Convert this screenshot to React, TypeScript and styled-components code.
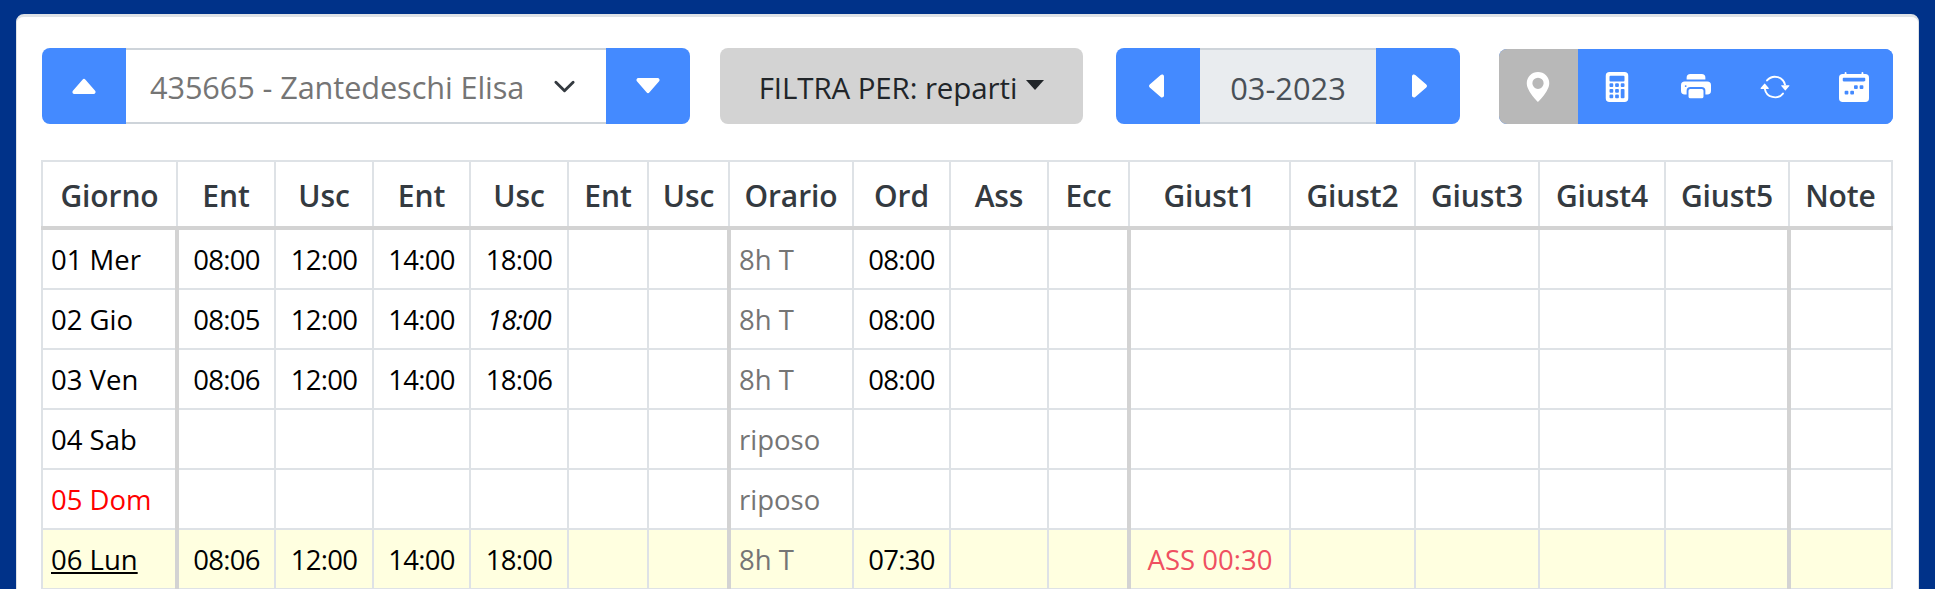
import React from "react";
import styled, { createGlobalStyle } from "styled-components";
import {
  BsCaretUpFill,
  BsCaretDownFill,
  BsCaretLeftFill,
  BsCaretRightFill,
  BsGeoAltFill,
  BsCalculatorFill,
  BsPrinterFill,
  BsArrowRepeat,
  BsCalendar2WeekFill,
} from "react-icons/bs";

const GlobalStyle = createGlobalStyle`
  html, body {
    margin: 0;
    height: 589px;
    overflow: hidden;
    background: #003289;
    font-family: "Open Sans", "Liberation Sans", sans-serif;
  }
`;

const Card = styled.div`
  margin: 14px 16px 0 16px;
  padding: 31px 25px 40px 25px;
  background: #fff;
  border: 1px solid #dee2e6;
  border-top-width: 3px;
  border-radius: 8px;
  box-sizing: content-box;
  width: 1851px;
`;

const Toolbar = styled.div`
  display: flex;
  align-items: stretch;
  height: 76px;
  margin-bottom: 36px;
`;

const Group = styled.div<{ $w: number; $ml: number }>`
  display: flex;
  width: ${(p) => p.$w}px;
  margin-left: ${(p) => p.$ml}px;
  border-radius: 8px;
  overflow: hidden;
`;

const BlueButton = styled.div`
  width: 84px;
  flex: none;
  display: flex;
  align-items: center;
  justify-content: center;
  background: #448aff;
  color: #fff;
  font-size: 32px;
`;

const SelectBox = styled.div`
  flex: 1;
  display: flex;
  align-items: center;
  justify-content: space-between;
  padding: 0 30px 0 24px;
  border-top: 2px solid #ced4da;
  border-bottom: 2px solid #ced4da;
  color: #757575;
  font-size: 30.7px;
  letter-spacing: -0.1px;

  span {
    padding-top: 2px;
  }
`;

const MonthBox = styled.div`
  flex: 1;
  display: flex;
  align-items: center;
  justify-content: center;
  padding-top: 3px;
  background: #e9ecef;
  border-top: 2px solid #ced4da;
  border-bottom: 2px solid #ced4da;
  color: #495057;
  font-size: 30.8px;
`;

const FilterButton = styled.div`
  width: 363px;
  margin-left: 30px;
  display: flex;
  align-items: center;
  justify-content: center;
  gap: 9px;
  padding-top: 2px;
  box-sizing: border-box;
  background: #d3d3d3;
  border-radius: 8px;
  color: #212529;
  font-size: 29.5px;
  letter-spacing: -0.1px;
`;

const Caret = styled.span`
  width: 0;
  height: 0;
  margin-bottom: 5px;
  border-top: 10px solid #212529;
  border-left: 9px solid transparent;
  border-right: 9px solid transparent;
`;

const IconBar = styled.div`
  width: 394px;
  margin: 1px 0 0 39px;
  display: flex;
  border-radius: 8px;
  overflow: hidden;
  background: #448aff;
`;

const IconButton = styled.div<{ $active?: boolean }>`
  flex: 1;
  display: flex;
  align-items: center;
  justify-content: center;
  background: ${(p) => (p.$active ? "#b8b8b8" : "#448aff")};
  color: #fff;
  font-size: 30px;
`;

const Table = styled.table`
  width: 1850px;
  margin-left: -1px;
  table-layout: fixed;
  border-collapse: collapse;
  color: #000;
  font-size: 27.5px;
`;

const HeadCell = styled.th`
  height: 62px;
  padding: 2px 0 0;
  border: 2px solid #dee2e6;
  border-bottom: 4px solid #d3d3d3;
  color: #343a40;
  font-size: 30px;
  font-weight: 600;
  letter-spacing: -0.1px;
  text-align: center;
`;

const Cell = styled.td<{ $thick?: boolean; $left?: boolean; $muted?: boolean; $time?: boolean }>`
  height: 57px;
  padding: 1px 0 0 ${(p) => (p.$left ? "8px" : "0")};
  border: 2px solid #dee2e6;
  border-left: ${(p) => (p.$thick ? "4px solid #d3d3d3" : "2px solid #dee2e6")};
  text-align: ${(p) => (p.$left ? "left" : "center")};
  color: ${(p) => (p.$muted ? "#757575" : "inherit")};
  letter-spacing: ${(p) => (p.$time ? "-0.7px" : "0")};
`;

const Row = styled.tr<{ $today?: boolean }>`
  background: ${(p) => (p.$today ? "#ffffe0" : "#fff")};
`;

const DayLabel = styled.span<{ $holiday?: boolean; $today?: boolean }>`
  color: ${(p) => (p.$holiday ? "#ff0000" : "#000")};
  text-decoration: ${(p) => (p.$today ? "underline" : "none")};
`;

const Estimated = styled.em`
  font-style: italic;
`;

const Absence = styled.span`
  color: #ef5061;
`;

const widths = [135, 98, 98, 97, 98, 80, 81, 124, 97, 98, 81, 161, 125, 124, 126, 124, 103];

const headers = [
  "Giorno", "Ent", "Usc", "Ent", "Usc", "Ent", "Usc", "Orario", "Ord",
  "Ass", "Ecc", "Giust1", "Giust2", "Giust3", "Giust4", "Giust5", "Note",
];

const days = [
  { day: "01 Mer", times: ["08:00", "12:00", "14:00", "18:00"], shift: "8h T", ord: "08:00" },
  { day: "02 Gio", times: ["08:05", "12:00", "14:00", "18:00"], shift: "8h T", ord: "08:00", italicLast: true },
  { day: "03 Ven", times: ["08:06", "12:00", "14:00", "18:06"], shift: "8h T", ord: "08:00" },
  { day: "04 Sab", times: ["", "", "", ""], shift: "riposo", ord: "" },
  { day: "05 Dom", times: ["", "", "", ""], shift: "riposo", ord: "", holiday: true },
  { day: "06 Lun", times: ["08:06", "12:00", "14:00", "18:00"], shift: "8h T", ord: "07:30", today: true, giust: "ASS 00:30" },
];

const Chevron = () => (
  <svg width="23" height="23" viewBox="0 0 16 16" fill="none" stroke="#343a40" strokeWidth="2" strokeLinecap="round" strokeLinejoin="round">
    <path d="M2 5l6 6 6-6" />
  </svg>
);

export default function App() {
  return (
    <>
      <GlobalStyle />
      <Card>
        <Toolbar>
          <Group $w={648} $ml={0}>
            <BlueButton><BsCaretUpFill /></BlueButton>
            <SelectBox>
              <span>435665 - Zantedeschi Elisa</span>
              <Chevron />
            </SelectBox>
            <BlueButton><BsCaretDownFill /></BlueButton>
          </Group>
          <FilterButton>FILTRA PER: reparti <Caret /></FilterButton>
          <Group $w={344} $ml={33}>
            <BlueButton><BsCaretLeftFill /></BlueButton>
            <MonthBox>03-2023</MonthBox>
            <BlueButton><BsCaretRightFill /></BlueButton>
          </Group>
          <IconBar>
            <IconButton $active><BsGeoAltFill /></IconButton>
            <IconButton><BsCalculatorFill /></IconButton>
            <IconButton><BsPrinterFill /></IconButton>
            <IconButton><BsArrowRepeat /></IconButton>
            <IconButton><BsCalendar2WeekFill /></IconButton>
          </IconBar>
        </Toolbar>
        <Table>
          <colgroup>
            {widths.map((w, i) => <col key={i} width={w} />)}
          </colgroup>
          <thead>
            <tr>
              {headers.map((h, i) => <HeadCell key={i}>{h}</HeadCell>)}
            </tr>
          </thead>
          <tbody>
            {days.map((d) => (
              <Row key={d.day} $today={d.today}>
                <Cell $left>
                  <DayLabel $holiday={d.holiday} $today={d.today}>{d.day}</DayLabel>
                </Cell>
                {d.times.map((t, i) => (
                  <Cell key={i} $thick={i === 0} $time>
                    {d.italicLast && i === 3 ? <Estimated>{t}</Estimated> : t}
                  </Cell>
                ))}
                <Cell />
                <Cell />
                <Cell $thick $left $muted>{d.shift}</Cell>
                <Cell $time>{d.ord}</Cell>
                <Cell />
                <Cell />
                <Cell $thick>{d.giust ? <Absence>{d.giust}</Absence> : null}</Cell>
                <Cell />
                <Cell />
                <Cell />
                <Cell />
                <Cell $thick />
              </Row>
            ))}
          </tbody>
        </Table>
      </Card>
    </>
  );
}
